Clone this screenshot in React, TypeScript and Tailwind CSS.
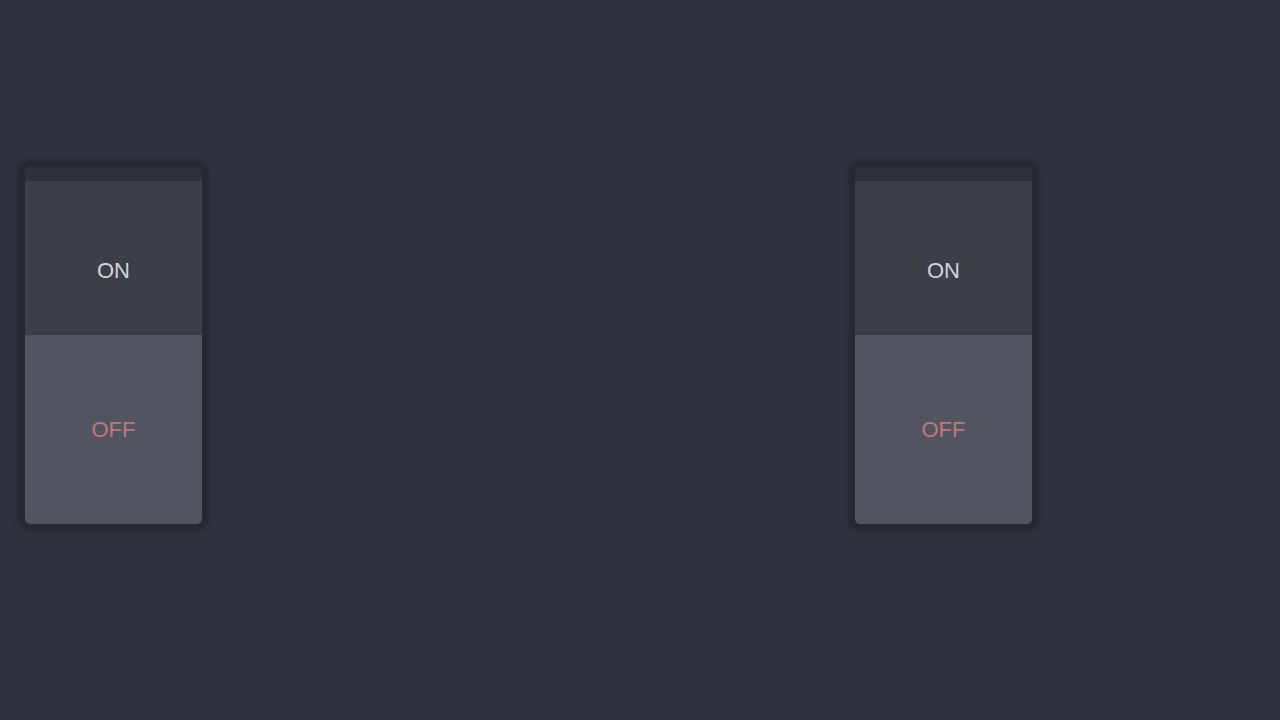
function RockerSwitch() {
  return (
    <div className="w-[187px] rounded-[9px] bg-[#262932] p-[5px] shadow-[0_0_6px_rgba(0,0,0,0.35)]">
      <div className="flex flex-col overflow-hidden rounded-[5px]">
        <div className="h-[14px] bg-[#30323b]" />
        <div className="flex h-[154px] items-center justify-center bg-[#3c3e48] pt-[24px] text-[22px] text-[#d4d4da]">
          ON
        </div>
        <div className="flex h-[189px] items-center justify-center bg-[#52545f] text-[22px] text-[#bc7b7b]">
          OFF
        </div>
      </div>
    </div>
  )
}

export default function App() {
  return (
    <div
      className="flex h-[720px] w-full items-start gap-[643px] bg-[#2f323c] pl-[20px] pt-[162px]"
      style={{ fontFamily: '"Liberation Sans", Arial, sans-serif' }}
    >
      <RockerSwitch />
      <RockerSwitch />
    </div>
  )
}
